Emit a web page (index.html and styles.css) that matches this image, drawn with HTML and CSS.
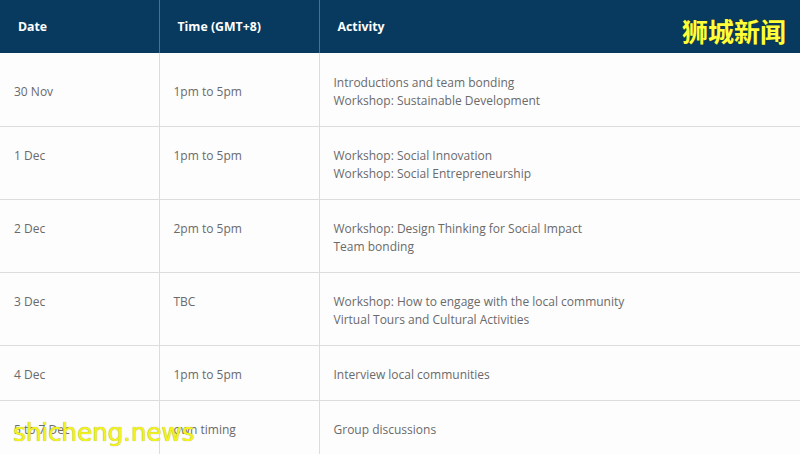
FILE: index.html
```html
<!DOCTYPE html>
<html>
<head>
<meta charset="utf-8">
<link rel="stylesheet" href="styles.css">
</head>
<body>
<div class="page">
  <table class="schedule">
    <thead>
      <tr><th class="c1">Date</th><th class="c2">Time (GMT+8)</th><th class="c3">Activity</th></tr>
    </thead>
    <tbody>
      <tr class="first"><td>30 Nov</td><td>1pm to 5pm</td><td>Introductions and team bonding<br>Workshop: Sustainable Development</td></tr>
      <tr><td>1 Dec</td><td>1pm to 5pm</td><td>Workshop: Social Innovation<br>Workshop: Social Entrepreneurship</td></tr>
      <tr><td>2 Dec</td><td>2pm to 5pm</td><td>Workshop: Design Thinking for Social Impact<br>Team bonding</td></tr>
      <tr><td>3 Dec</td><td>TBC</td><td>Workshop: How to engage with the local community<br>Virtual Tours and Cultural Activities</td></tr>
      <tr><td>4 Dec</td><td>1pm to 5pm</td><td>Interview local communities</td></tr>
      <tr><td>5 to 7 Dec</td><td>own timing</td><td>Group discussions</td></tr>
    </tbody>
  </table>
  <div class="mark-cn">狮城新闻</div>
  <div class="mark-en">shicheng.news</div>
</div>
</body>
</html>
```
FILE: styles.css
```css
html, body { margin: 0; padding: 0; background: #fff; }
body { width: 800px; height: 454px; overflow: hidden; }
.page { position: relative; width: 800px; height: 454px; overflow: hidden; background: #fdfdfe; }
.schedule {
  width: 800px;
  border-collapse: collapse;
  table-layout: fixed;
  font-family: "Open Sans", "Liberation Sans", sans-serif;
  font-size: 12px;
}
.schedule th {
  background: #073a5e;
  color: #fff;
  font-weight: bold;
  text-align: left;
  height: 53px;
  padding: 0 0 0 18px;
  box-sizing: border-box;
  border-left: 1px solid #3f7397;
  font-size: 12.3px;
}
.schedule th.c1 { width: 159px; border-left: none; }
.schedule th.c2 { width: 160px; }
.schedule td {
  color: #6a6a6a;
  vertical-align: top;
  line-height: 18px;
  padding: 20px 10px 16px 14px;
  border-left: 1px solid #dcdcdf;
  border-top: 1px solid #dcdcdf;
}
.schedule td:first-child { border-left: none; }
.schedule tr.first td { border-top: none; padding-top: 21px; }
.schedule tr.first td:nth-child(1),
.schedule tr.first td:nth-child(2) { vertical-align: middle; }
.mark-cn {
  position: absolute;
  right: 14px;
  top: 12px;
  font-family: "Noto Sans CJK SC", sans-serif;
  font-size: 26px;
  font-weight: bold;
  color: #ffff3a;
  text-shadow: 0 0 1px #3a3a10;
}
.mark-en {
  position: absolute;
  left: 13px;
  top: 418px;
  font-family: "DejaVu Sans", sans-serif;
  font-size: 25px;
  color: #f2f21e;
  letter-spacing: -0.3px;
  text-shadow: 0 0 1px #9a9a20;
}
```
